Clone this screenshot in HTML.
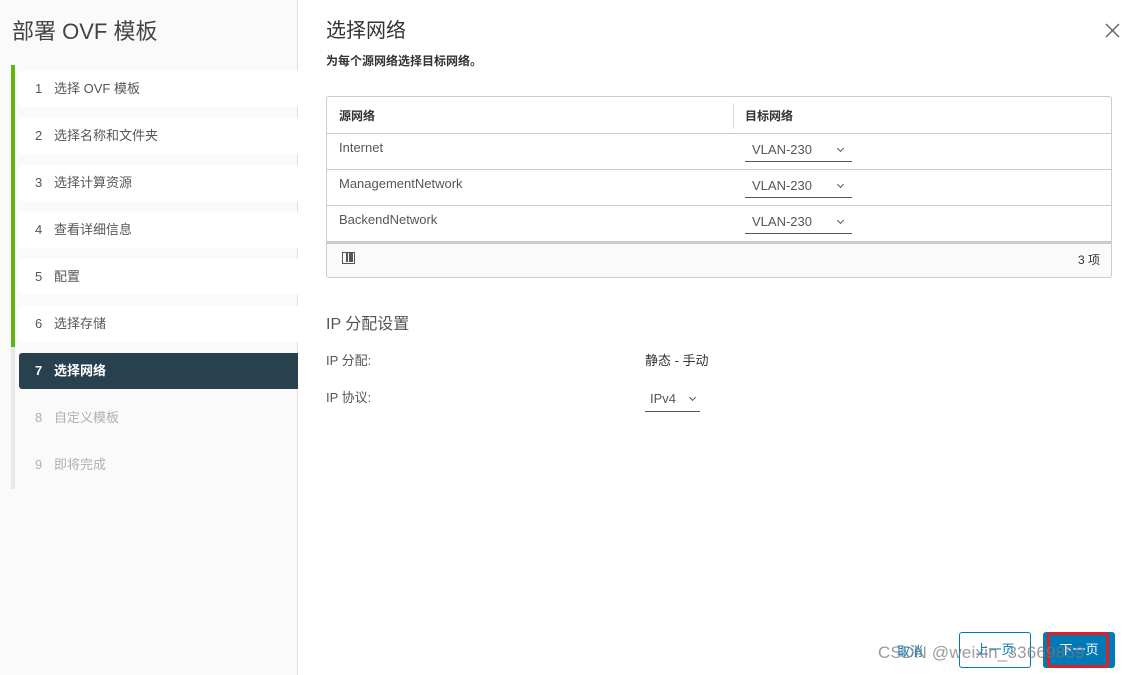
<!DOCTYPE html>
<html><head><meta charset="utf-8"><style>
*{margin:0;padding:0;box-sizing:border-box}
body{width:1125px;height:675px;background:#fff;font-family:"Liberation Sans","Noto Sans CJK SC",sans-serif;position:relative;overflow:hidden;color:#565656}
.a{position:absolute}
.side{left:0;top:0;width:298px;height:675px;background:#fafafa;border-right:1px solid #e0e0e0}
.item{position:absolute;left:19px;width:279px;height:36px;background:#fff;border-radius:3px 0 0 3px;font-size:13px;line-height:36px;padding-left:16px;color:#565656}
.item b{font-weight:normal;display:inline-block;width:19px}
.row{position:absolute;left:0;width:100%;border-top:1px solid #ccc;font-size:13px;color:#565656}
.sel{position:absolute;left:418px;width:107px;border-bottom:1px solid #565656;font-size:13px;padding-left:7px;height:24px;line-height:24px}
.chev{position:absolute;right:9px;top:8px;width:5px;height:5px;border-right:1.2px solid #565656;border-bottom:1.2px solid #565656;transform:rotate(45deg)}
</style></head><body>
<div class="a side"></div>
<div class="a" style="left:12px;top:14px;font-size:22px;color:#444">部署 OVF 模板</div>
<div class="a" style="left:11px;top:65px;width:4px;height:424px;background:#e8e8e8"></div>
<div class="a" style="left:11px;top:65px;width:4px;height:282px;background:#60b515"></div>
<div class="item" style="top:71px"><b>1</b>选择 OVF 模板</div>
<div class="item" style="top:118px"><b>2</b>选择名称和文件夹</div>
<div class="item" style="top:165px"><b>3</b>选择计算资源</div>
<div class="item" style="top:212px"><b>4</b>查看详细信息</div>
<div class="item" style="top:259px"><b>5</b>配置</div>
<div class="item" style="top:306px"><b>6</b>选择存储</div>
<div class="item" style="top:353px;background:#29414e;color:#fff;font-weight:bold"><b style="font-weight:bold">7</b>选择网络</div>
<div class="item" style="top:400px;background:none;color:#b0b0b0"><b>8</b>自定义模板</div>
<div class="item" style="top:447px;background:none;color:#b0b0b0"><b>9</b>即将完成</div>

<div class="a" style="left:326px;top:14px;font-size:20px;color:#333">选择网络</div>
<div class="a" style="left:326px;top:52px;font-size:12px;color:#333;font-weight:bold">为每个源网络选择目标网络。</div>
<svg class="a" style="left:1105px;top:23px" width="15" height="15"><path d="M1 1L14 14M14 1L1 14" stroke="#666" stroke-width="1.5"/></svg>

<div class="a" style="left:326px;top:96px;width:786px;height:182px;border:1px solid #ccc;border-radius:3px;overflow:hidden">
 <div class="a" style="left:12px;top:10px;font-size:12px;font-weight:bold;color:#333">源网络</div>
 <div class="a" style="left:406px;top:6px;height:26px;border-left:1px solid #ddd"></div>
 <div class="a" style="left:418px;top:10px;font-size:12px;font-weight:bold;color:#333">目标网络</div>
 <div class="row" style="top:36px;height:36px"><span class="a" style="left:12px;top:6px">Internet</span><div class="sel" style="top:4px">VLAN-230<i class="chev"></i></div></div>
 <div class="row" style="top:72px;height:36px"><span class="a" style="left:12px;top:6px">ManagementNetwork</span><div class="sel" style="top:4px">VLAN-230<i class="chev"></i></div></div>
 <div class="row" style="top:108px;height:36px"><span class="a" style="left:12px;top:6px">BackendNetwork</span><div class="sel" style="top:4px">VLAN-230<i class="chev"></i></div></div>
 <div class="a" style="left:0;top:144px;width:100%;height:38px;background:#fafafa;border-top:3px solid #ccc">
  <div class="a" style="left:15px;top:8px;width:13px;height:12px;border:1.5px solid #565656"><div class="a" style="left:3px;top:0;width:1.5px;height:9px;background:#565656"></div><div class="a" style="left:6px;top:0;width:4px;height:9px;background:#565656"></div></div>
  <div class="a" style="right:11px;top:7px;font-size:12px;color:#333">3 项</div>
 </div>
</div>

<div class="a" style="left:326px;top:310px;font-size:16px;color:#565656">IP 分配设置</div>
<div class="a" style="left:326px;top:350px;font-size:13px">IP 分配:</div>
<div class="a" style="left:645px;top:350px;font-size:13px;color:#333">静态 - 手动</div>
<div class="a" style="left:326px;top:387px;font-size:13px">IP 协议:</div>
<div class="sel" style="left:645px;top:386px;width:55px;padding-left:5px;height:26px;line-height:26px">IPv4<i class="chev" style="right:5px;top:9px"></i></div>

<div class="a" style="left:897px;top:641px;font-size:13px;color:#0079b8">取消</div>
<div class="a" style="left:959px;top:632px;width:72px;height:36px;border:1px solid #0079b8;border-radius:3px;color:#0079b8;font-size:13px;text-align:center;line-height:34px">上一页</div>
<div class="a" style="left:1043px;top:632px;width:72px;height:36px;background:#0079b8;border-radius:3px;color:#fff;font-size:13px;text-align:center;line-height:36px">下一页</div>
<div class="a" style="left:1047px;top:632px;width:62px;height:36px;border:3px solid #e02020;border-radius:4px"></div>
<div class="a" style="left:878px;top:643px;font-size:17px;color:rgba(120,120,120,0.75);letter-spacing:0.2px">CSDN @weixin_33669859</div>
</body></html>
